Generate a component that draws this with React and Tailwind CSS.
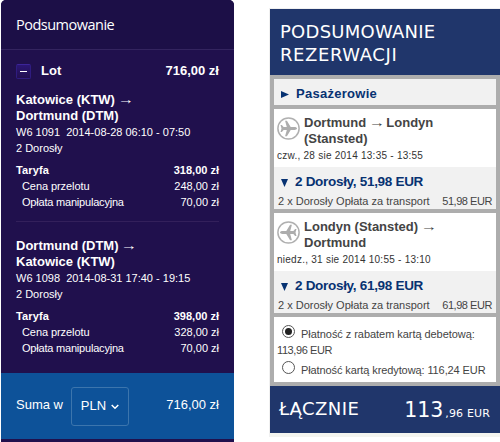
import React from "react";

const Arrow = () => <span className="inline-block scale-x-125 font-['Liberation_Sans'] font-normal">→</span>;

function PriceRow({ label, value, className = "", labelClass = "", valueClass = "" }) {
  return (
    <div className={`flex h-4 items-center justify-between whitespace-nowrap ${className}`}>
      <span className={labelClass}>{label}</span>
      <span className={valueClass}>{value}</span>
    </div>
  );
}

function WizzFlight({ from, to, details, fare, price }) {
  return (
    <div className="text-[11px] leading-4 whitespace-nowrap">
      <div className="text-[13px] font-bold">
        <div className="h-4">{from} <Arrow /></div>
        <div className="h-4">{to}</div>
      </div>
      <div className="h-4 whitespace-pre">{details}</div>
      <div className="h-4">2 Dorosły</div>
      <div className="mt-1.5">
        <PriceRow label="Taryfa" value={fare} className="font-bold" labelClass="tracking-[0.15px]" />
        <PriceRow label="Cena przelotu" value={price} className="pl-1.5" labelClass="tracking-[-0.08px]" />
        <PriceRow label="Opłata manipulacyjna" value="70,00 zł" className="pl-1.5" labelClass="tracking-[-0.2px]" />
      </div>
    </div>
  );
}

function WizzSummary() {
  return (
    <section className="ml-px flex h-[442px] w-[233px] flex-col overflow-hidden rounded-t-[5px] bg-[#20104d] text-white">
      <header className="flex h-[50px] shrink-0 items-center border-b border-[#33245f] bg-[#1c0f47] pl-[15px] pt-px font-['Open_Sans',sans-serif] text-[14.5px] font-medium tracking-[-0.5px]">
        Podsumowanie
      </header>
      <div className="h-[323px] shrink-0 px-[15px]">
        <div className="flex h-[42px] items-center text-[13px] font-bold">
          <span className="flex size-[15px] items-center justify-center rounded-[2px] border border-[#2f1c80] border-t-[#3c2599] bg-linear-to-b from-[#2b1574] to-[#22104f]">
            <span className="h-px w-[7px] bg-white" />
          </span>
          <span className="ml-2.5">Lot</span>
          <span className="ml-auto">716,00 zł</span>
        </div>
        <WizzFlight from="Katowice (KTW)" to="Dortmund (DTM)" details="W6 1091  2014-08-28 06:10 - 07:50" fare="318,00 zł" price="248,00 zł" />
        <div className="mt-[11px] mb-[16px] h-px bg-[#33205b]" />
        <WizzFlight from="Dortmund (DTM)" to="Katowice (KTW)" details="W6 1098  2014-08-31 17:40 - 19:15" fare="398,00 zł" price="328,00 zł" />
      </div>
      <div className="flex h-[66px] shrink-0 items-center bg-[#0d5299] px-[15px] pb-[3px] text-[13px]">
        <span>Suma w</span>
        <button className="mt-1 ml-2 flex h-[39px] w-[58px] items-center justify-center gap-[5px] rounded-[3px] border border-[#3c75ad] pb-0.5">
          <span>PLN</span>
          <svg className="mt-0.5" width="8" height="6" viewBox="0 0 8 6" fill="none" stroke="white" strokeWidth="1.5"><path d="M.7 1 4 4.2 7.3 1" /></svg>
        </button>
        <span className="ml-auto">716,00 zł</span>
      </div>
    </section>
  );
}

function PlaneIcon({ flipped }) {
  return (
    <svg className={`size-[23px] shrink-0 ${flipped ? "-scale-x-100" : ""}`} viewBox="0 0 23 23">
      <circle cx="11.5" cy="11.5" r="10.6" fill="none" stroke="#b0b0b0" strokeWidth="1.5" />
      <path fill="#adadad" d="M20 11.5c0-.8-1.3-1.4-2.5-1.4h-3.8L9.9 3.8H8.1l1.7 6.3H6.6L4.9 8H3.5l1 3.5-1 3.5h1.4l1.7-2.1h3.2l-1.7 6.3h1.8l3.8-6.3h3.8c1.2 0 2.5-.6 2.5-1.4Z" />
    </svg>
  );
}

function RyanairFlight({ children, flipped, date, price }) {
  return (
    <div className="mb-1 h-[100px] whitespace-nowrap">
      <div className="h-[58px] bg-white pl-[3px] pt-[6px]">
        <div className="flex gap-1">
          <div className="pt-[2px]"><PlaneIcon flipped={flipped} /></div>
          <div className="text-[13px] leading-4 font-bold text-[#444]">{children}</div>
        </div>
        <div className="mt-[1px] text-[10px] leading-4 tracking-[0.25px] text-[#333]">{date}</div>
      </div>
      <div className="h-[42px] bg-[#f1f1f1] pt-[7px]">
        <div className="flex h-4 items-center pl-[7px] text-[13.5px] font-bold tracking-[-0.3px] text-[#073272]">
          <svg className="mt-0.5 mr-[7px] shrink-0" width="7" height="8" viewBox="0 0 7 8"><path d="M0 0h7L3.5 8Z" fill="currentColor" /></svg>
          <span>2 Dorosły, {price}</span>
        </div>
        <PriceRow label="2 x Dorosły Opłata za transport" value={price} className="mt-[3px] pl-1 pr-1 text-[11px] text-[#444]" valueClass="tracking-[-0.45px]" />
      </div>
    </div>
  );
}

function Radio({ checked }) {
  return (
    <span className="flex size-[13px] shrink-0 items-center justify-center rounded-full border border-[#555] bg-white">
      {checked && <span className="size-[7px] rounded-full bg-[#222]" />}
    </span>
  );
}

function RyanairSummary() {
  return (
    <section className="mt-2 ml-[35px] flex h-[429px] w-[231px] flex-col border-t border-l border-[#f0f0f0] bg-[#f3f4ef]">
      <header className="h-[66px] bg-[#20366b] pl-2.5 pt-[11px] font-['DejaVu_Sans',sans-serif] text-[18px] leading-[23px] text-white">
        <div className="tracking-[0.25px]">PODSUMOWANIE</div>
        <div className="tracking-[0.6px]">REZERWACJI</div>
      </header>
      <div className="h-[311px] bg-[#adadad] p-1">
        <div className="mb-1 flex h-[26px] items-center bg-[#f1f1f1] pl-[7px] pt-1 text-[13px] font-bold tracking-[0.28px] text-[#073272]">
          <svg className="mr-[7px] shrink-0" width="8" height="7" viewBox="0 0 8 7"><path d="M0 0v7l8-3.5Z" fill="currentColor" /></svg>
          <span>Pasażerowie</span>
        </div>
        <RyanairFlight date="czw., 28 sie 2014 13:35 - 13:55" price="51,98 EUR">
          <div>Dortmund <Arrow /> Londyn</div>
          <div>(Stansted)</div>
        </RyanairFlight>
        <RyanairFlight flipped date="niedz., 31 sie 2014 10:55 - 13:10" price="61,98 EUR">
          <div>Londyn (Stansted) <Arrow /></div>
          <div>Dortmund</div>
        </RyanairFlight>
        <div className="h-[65px] bg-white pl-[3px] pt-[8px] text-[11px] leading-4 whitespace-nowrap text-[#444]">
          <div className="flex h-[17px] gap-[6px] pl-[5px]"><Radio checked /><span className="pt-px tracking-[-0.05px]">Płatność z rabatem kartą debetową:</span></div>
          <div className="h-4 tracking-[-0.4px]">113,96 EUR</div>
          <div className="mt-[3px] flex h-[17px] gap-[6px] pl-[5px]"><Radio /><span className="pt-px tracking-[-0.1px]">Płatność kartą kredytową: 116,24 EUR</span></div>
        </div>
      </div>
      <footer className="flex h-[47px] items-start justify-between bg-[#20366b] pl-[9px] pr-[10px] font-['DejaVu_Sans',sans-serif] leading-7 text-white">
        <span className="pt-[9px] text-[18px] tracking-[0.45px]">ŁĄCZNIE</span>
        <span className="pt-[10px] text-[20.5px]">113<span className="ml-0.5 text-[11px] tracking-[0.15px]">,96 EUR</span></span>
      </footer>
    </section>
  );
}

export default function App() {
  return (
    <main className="flex h-[442px] w-[500px] overflow-hidden bg-white font-['Liberation_Sans',Arial,sans-serif]">
      <WizzSummary />
      <RyanairSummary />
    </main>
  );
}
